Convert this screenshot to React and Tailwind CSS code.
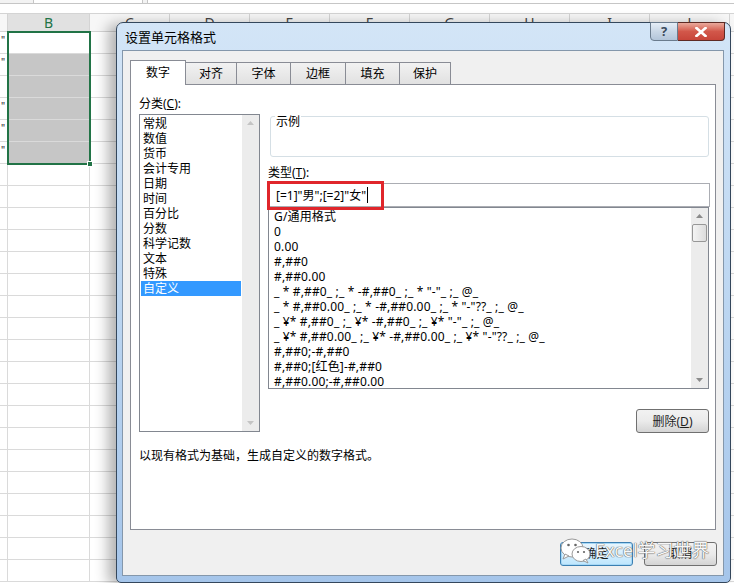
// ----------------------------------- Data -----------------------------------
const headers = ["C", "D", "E", "F", "G", "H", "I", "J"];
const rows = Array.from({ length: 25 }, (_, i) => i);
const quoteRows = [0, 1, 3, 4, 5];

const tabs = [
    { label: "数字", w: "w-[56px]" },
    { label: "对齐", w: "w-[52px]" },
    { label: "字体", w: "w-[55px]" },
    { label: "边框", w: "w-[56px]" },
    { label: "填充", w: "w-[55px]" },
    { label: "保护", w: "w-[52px]" },
];
const categories = ["常规", "数值", "货币", "会计专用", "日期", "时间", "百分比", "分数", "科学记数", "文本", "特殊", "自定义"];
const formats = [
    "G/通用格式",
    "0",
    "0.00",
    "#,##0",
    "#,##0.00",
    '_ * #,##0_ ;_ * -#,##0_ ;_ * "-"_ ;_ @_',
    '_ * #,##0.00_ ;_ * -#,##0.00_ ;_ * "-"??_ ;_ @_',
    '_ ¥* #,##0_ ;_ ¥* -#,##0_ ;_ ¥* "-"_ ;_ @_',
    '_ ¥* #,##0.00_ ;_ ¥* -#,##0.00_ ;_ ¥* "-"??_ ;_ @_',
    "#,##0;-#,##0",
    "#,##0;[红色]-#,##0",
    "#,##0.00;-#,##0.00",
];

// ----------------------------------- Small parts -----------------------------------
function Arrow({ up, color = "#8b8b8b" }) {
    return (
        <svg width="7" height="4" viewBox="0 0 7 4">
            <path d={up ? "M0 4L3.5 0L7 4Z" : "M0 0L3.5 4L7 0Z"} fill={color} />
        </svg>
    );
}

function WinButton({ children, focused }) {
    return (
        <div className={`w-[73px] h-[24px] rounded-[3px] border flex items-center justify-center text-[12px] text-[#1e1e1e] ${focused ? "border-[#3c7fb1] bg-gradient-to-b from-[#eaf6fd] to-[#bee6fd] shadow-[inset_0_0_0_1px_#a6d8f6]" : "border-[#707070] bg-gradient-to-b from-[#f2f2f2] via-[#ebebeb] to-[#d4d4d4]"}`}>
            {children}
        </div>
    );
}

// ----------------------------------- Spreadsheet behind -----------------------------------
function Sheet() {
    return (
        <div className="w-[734px] h-[583px] bg-white text-[#444]">
            <div className="h-[4px] flex border-b border-[#c6c6c6] bg-[#f3f3f3]">
                <div className="w-[33px]" />
                <div className="w-[110px] bg-white border-x border-[#c6c6c6]" />
                <div className="w-[4px]" />
                <div className="flex-1 bg-white border-l border-[#c6c6c6]" />
            </div>
            <div className="h-[9px] bg-white" />
            <div className="h-[19px] flex bg-[#f7f7f7] border-y border-[#d4d4d4] text-[14px] leading-[17px]">
                <div className="w-[8px] border-r border-[#d4d4d4]" />
                <div className="w-[82px] border-r border-[#d4d4d4] bg-[#e1e1e1] text-[#217346] text-center">B</div>
                {headers.map((h) => (
                    <div key={h} className="w-[80px] shrink-0 border-r border-[#d4d4d4] text-center">{h}</div>
                ))}
            </div>
            {rows.map((r) => (
                <div key={r} className="h-[22px] flex border-b border-[#dadada]">
                    <div className="w-[8px] border-r border-[#dadada] text-[10px] leading-[10px] text-[#222] pl-[1px] pt-[3px]">
                        {quoteRows.includes(r) ? '"' : ""}
                    </div>
                    <div className={`w-[82px] border-r border-[#dadada] ${r >= 1 && r <= 5 ? "bg-[#c6c6c6]" : ""}`} />
                    {headers.map((h) => (
                        <div key={h} className="w-[80px] shrink-0 border-r border-[#dadada]" />
                    ))}
                </div>
            ))}
        </div>
    );
}

// ----------------------------------- Dialog -----------------------------------
function Dialog() {
    return (
        <div className="absolute left-[116px] top-[22px] w-[615px] h-[561px] rounded-t-[7px] rounded-b-[5px] border border-[#34475c] bg-gradient-to-b from-[#d3e5f7] via-[#bcd6f1] to-[#a5c5ea] shadow-[-8px_2px_14px_rgba(0,0,0,0.3)] pl-[5px] pr-[6px]">
            {/* title bar */}
            <div className="h-[27px] flex items-start">
                <div className="pl-[3px] pt-[6px] text-[13px] leading-[16px] text-black">设置单元格格式</div>
                <div className="ml-auto -mt-px mr-[-1px] flex">
                    <div className="w-[28px] h-[19px] rounded-bl-[4px] border border-[#6a7b8d] bg-gradient-to-b from-[#e6eef7] via-[#c9d7e6] to-[#b3c5d9] flex items-center justify-center text-[13px] font-bold text-[#3a4a5c] leading-none">?</div>
                    <div className="w-[47px] h-[19px] rounded-br-[4px] border border-l-0 border-[#5e2a24] bg-gradient-to-b from-[#e9a99c] via-[#d2574a] to-[#c7453a] flex items-center justify-center">
                        <svg width="12" height="10" viewBox="0 0 12 10">
                            <path d="M1.5 1L10.5 9M10.5 1L1.5 9" stroke="#fff" strokeWidth="2.6" strokeLinecap="square" />
                        </svg>
                    </div>
                </div>
            </div>

            {/* client area */}
            <div className="w-[602px] h-[526px] border border-[#8497ab] bg-[#f0f0f0] pt-[9px] pl-[7px]">
                {/* tabs */}
                <div className="h-[24px] flex items-end text-[12px] text-black">
                    {tabs.map((t, i) => (
                        <div
                            key={t.label}
                            className={i === 0
                                ? `relative z-10 ${t.w} h-[25px] mb-[-1px] border border-b-0 border-[#898c95] bg-white flex items-center justify-center pb-[1px]`
                                : `${t.w} h-[22px] -ml-px border border-b-0 border-[#898c95] bg-gradient-to-b from-[#f2f2f2] to-[#e1e1e1] flex items-center justify-center`}
                        >
                            {t.label}
                        </div>
                    ))}
                </div>

                {/* tab page */}
                <div className="w-[586px] h-[446px] border border-[#898c95] bg-white pl-[8px] pt-[11px] text-[12px] leading-[15px] text-black">
                    <div className="flex gap-[8px]">
                        {/* left column */}
                        <div className="w-[121px]">
                            <div className="h-[15px]">分类(<span className="underline">C</span>):</div>
                            <div className="mt-[3px] h-[318px] border border-[#828790] flex">
                                <div className="flex-1 pt-[1px] px-[1px]">
                                    {categories.map((c, i) => (
                                        <div key={c} className={`h-[15px] pl-[2px] ${i === categories.length - 1 ? "bg-[#3399ff] text-white" : ""}`}>{c}</div>
                                    ))}
                                </div>
                                <div className="w-[17px] bg-[#ececec] flex flex-col items-center justify-between py-[6px]">
                                    <Arrow up color="#c4c4c4" />
                                    <Arrow color="#c4c4c4" />
                                </div>
                            </div>
                        </div>

                        {/* right column */}
                        <div className="w-[442px] pt-[20px]">
                            <div className="relative ml-[2px] w-[439px] h-[41px] border border-[#d5dfe5] rounded-[3px]">
                                <div className="absolute left-[4px] top-[-3px] px-[1px] bg-white">示例</div>
                            </div>
                            <div className="mt-[8px] h-[15px]">类型(<span className="underline">T</span>):</div>
                            <div className="relative mt-[3px] h-[24px] border border-[#abadb3] flex items-center pl-[7px]">
                                <span className="whitespace-pre">[=1]"男";[=2]"女"</span>
                                <span className="ml-[1px] w-px h-[16px] bg-black" />
                                <div className="absolute left-[-2px] top-[-3px] w-[117px] h-[29px] border-[3px] border-[#e0262b]" />
                            </div>
                            <div className="w-[441px] h-[182px] border border-[#828790] flex">
                                <div className="flex-1 pt-[1px] pl-[5px] tracking-[0.15px]">
                                    {formats.map((f) => (
                                        <div key={f} className="h-[15px] whitespace-pre">{f}</div>
                                    ))}
                                </div>
                                <div className="w-[17px] bg-[#ececec] flex flex-col items-center py-[6px]">
                                    <Arrow up />
                                    <div className="mt-[6px] w-[15px] h-[18px] rounded-[2px] border border-[#979797] bg-gradient-to-r from-[#f4f4f4] to-[#dcdcdc]" />
                                    <div className="flex-1" />
                                    <Arrow />
                                </div>
                            </div>
                            <div className="mt-[20px] flex justify-end pr-[1px]">
                                <WinButton>删除(<span className="underline">D</span>)</WinButton>
                            </div>
                        </div>
                    </div>
                    <div className="mt-[15px]">以现有格式为基础，生成自定义的数字格式。</div>
                </div>

                {/* bottom buttons */}
                <div className="mt-[12px] flex justify-end gap-[11px] pr-[6px]">
                    <WinButton focused>确定</WinButton>
                    <WinButton>取消</WinButton>
                </div>
            </div>
        </div>
    );
}

// ----------------------------------- Watermark -----------------------------------
function Watermark() {
    return (
        <div className="absolute left-[560px] top-[537px] flex items-center">
            <svg width="32" height="28" viewBox="0 0 32 28">
                <ellipse cx="12" cy="11" rx="11" ry="9" fill="#fff" stroke="#9a9a9a" strokeWidth="1" />
                <path d="M5 17L3 22L9 19Z" fill="#fff" stroke="#9a9a9a" strokeWidth="1" />
                <circle cx="8.5" cy="8" r="1.3" fill="#666" />
                <circle cx="15.5" cy="8" r="1.3" fill="#666" />
                <ellipse cx="21" cy="17" rx="9" ry="7.5" fill="#fff" stroke="#9a9a9a" strokeWidth="1" />
                <path d="M26 22L28 26L23 23.5Z" fill="#fff" stroke="#9a9a9a" strokeWidth="1" />
                <circle cx="18" cy="15" r="1.1" fill="#666" />
                <circle cx="24" cy="15" r="1.1" fill="#666" />
            </svg>
            <div className="ml-[3px] -mt-[2px] text-[18px] leading-[22px] text-[#f7f7f7] [text-shadow:0_0_1px_#4a4a4a,0_0_1px_#4a4a4a]">Excel学习世界</div>
        </div>
    );
}

// ----------------------------------- App -----------------------------------
export default function App() {
    return (
        <div className="relative w-[734px] h-[583px] overflow-hidden font-['Noto_Sans','Noto_Sans_CJK_SC',sans-serif]">
            <Sheet />
            {/* selection outline over column B */}
            <div className="absolute left-[7px] top-[31px] w-[84px] h-[134px] border-2 border-[#217346]" />
            <div className="absolute left-[87px] top-[161px] w-[6px] h-[6px] bg-[#217346] border border-white" />
            <Dialog />
            <Watermark />
        </div>
    );
}
